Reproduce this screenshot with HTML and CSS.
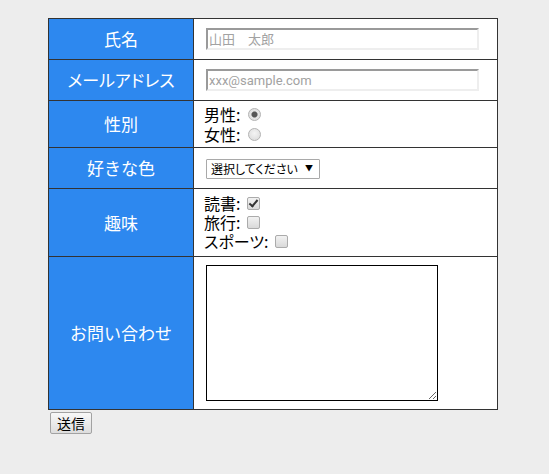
FILE: index.html
```html
<!DOCTYPE html>
<html lang="ja">
<head>
<meta charset="utf-8">
<title>お問い合わせフォーム</title>
<link rel="stylesheet" href="styles.css">
</head>
<body>
<div class="page">
  <form class="contact">
    <table class="form-table">
      <tr class="row-name">
        <th>氏名</th>
        <td><input class="text-input" type="text" placeholder="山田　太郎"></td>
      </tr>
      <tr class="row-mail">
        <th><span class="prop">メールアドレス</span></th>
        <td><input class="text-input" type="text" placeholder="xxx@sample.com"></td>
      </tr>
      <tr class="row-sex">
        <th>性別</th>
        <td>
          <div class="opt opt-radio">男性:<input class="radio" type="radio" name="sex" checked></div>
          <div class="opt opt-radio">女性:<input class="radio" type="radio" name="sex"></div>
        </td>
      </tr>
      <tr class="row-color">
        <th>好きな色</th>
        <td>
          <span class="select-wrap">
            <select class="select"><option>選択してください</option></select>
          </span>
        </td>
      </tr>
      <tr class="row-hobby">
        <th>趣味</th>
        <td>
          <div class="opt opt-check">読書:<input class="check" type="checkbox" checked></div>
          <div class="opt opt-check">旅行:<input class="check" type="checkbox"></div>
          <div class="opt opt-check"><span class="prop">スポーツ</span>:<input class="check" type="checkbox"></div>
        </td>
      </tr>
      <tr class="row-msg">
        <th>お問い合わせ</th>
        <td><textarea class="message"></textarea></td>
      </tr>
    </table>
    <button class="submit" type="button">送信</button>
  </form>
</div>
</body>
</html>
```

FILE: styles.css
```css
html, body {
  margin: 0;
  padding: 0;
  background: #ededed;
  font-family: "Noto Sans CJK JP", "Noto Sans", sans-serif;
}

.page {
  padding: 18px 0 0 48px;
}

.form-table {
  border-collapse: collapse;
  width: 450px;
  border: 1px solid #333;
}

.form-table th,
.form-table td {
  border: 1px solid #333;
  padding: 0;
  vertical-align: middle;
}

.form-table th {
  width: 144px;
  background: #2d88ef;
  color: #fff;
  font-size: 17px;
  font-weight: normal;
  text-align: center;
  line-height: 20px;
}

.form-table td {
  background: #fff;
  padding-left: 10px;
  font-size: 16px;
  color: #000;
  line-height: 19px;
}

.prop {
  font-feature-settings: "palt";
}

.row-name, .row-mail, .row-color { height: 41px; }
.row-sex { height: 47px; }
.row-hobby { height: 68px; }
.row-msg { height: 153px; }

.text-input {
  display: block;
  box-sizing: border-box;
  width: 273px;
  height: 22px;
  margin: 0 0 0 2px;
  padding: 0 1px;
  border-style: solid;
  border-width: 2px;
  border-color: #9a9a9a #eeeeee #eeeeee #9a9a9a;
  background: #fff;
  font-family: "Roboto", "Noto Sans CJK JP", sans-serif;
  font-size: 13px;
  outline: none;
}

.text-input::placeholder {
  color: #a2a2a2;
}

.opt {
  display: flex;
  align-items: center;
  line-height: 19px;
}

.opt-radio { height: 20px; }
.opt-check { height: 19px; }

.radio {
  appearance: none;
  -webkit-appearance: none;
  box-sizing: border-box;
  width: 13px;
  height: 13px;
  margin: 0 0 0 8px;
  border: 1px solid #b4b4b4;
  border-radius: 50%;
  background: radial-gradient(circle at 50% 40%, #f4f4f4, #d8d8d8);
}

.radio:checked {
  background: radial-gradient(circle, #555 0 2.5px, #9a9a9a 3px, #e4e4e4 3.6px, #dcdcdc 100%);
}

.check {
  appearance: none;
  -webkit-appearance: none;
  position: relative;
  box-sizing: border-box;
  width: 13px;
  height: 13px;
  margin: 0 0 0 7px;
  border: 1px solid #ababab;
  border-radius: 2px;
  background: linear-gradient(#f2f2f2, #d9d9d9);
}

.check:checked::after {
  content: "";
  position: absolute;
  left: 3px;
  top: 0px;
  width: 3px;
  height: 7px;
  border: solid #333;
  border-width: 0 2px 2px 0;
  transform: rotate(40deg);
}

.select-wrap {
  position: relative;
  display: inline-block;
  margin-left: 2px;
  vertical-align: middle;
}

.select {
  appearance: none;
  -webkit-appearance: none;
  box-sizing: border-box;
  width: 114px;
  height: 20px;
  margin: 0;
  padding: 0 16px 0 4px;
  border: 1px solid #a9a9a9;
  border-radius: 1px;
  background: #fff;
  color: #000;
  font-family: "Noto Sans CJK JP", sans-serif;
  font-size: 12px;
  font-feature-settings: "palt";
  line-height: 18px;
}

.select-wrap::after {
  content: "▼";
  position: absolute;
  right: 7px;
  top: 5px;
  font-size: 8px;
  line-height: 10px;
  color: #000;
  pointer-events: none;
}

.message {
  display: block;
  box-sizing: border-box;
  width: 232px;
  height: 136px;
  margin: 0 0 0 2px;
  border: 1px solid #000;
  padding: 2px;
  background: #fff;
  resize: both;
}

.submit {
  display: block;
  box-sizing: border-box;
  width: 42px;
  height: 22px;
  margin: 2px 0 0 2px;
  padding: 0;
  border: 1px solid #a2a2a2;
  border-radius: 2px;
  background: linear-gradient(#f8f8f8, #dddddd);
  color: #000;
  font-family: "Noto Sans CJK JP", sans-serif;
  font-size: 14px;
  line-height: 20px;
}
```
